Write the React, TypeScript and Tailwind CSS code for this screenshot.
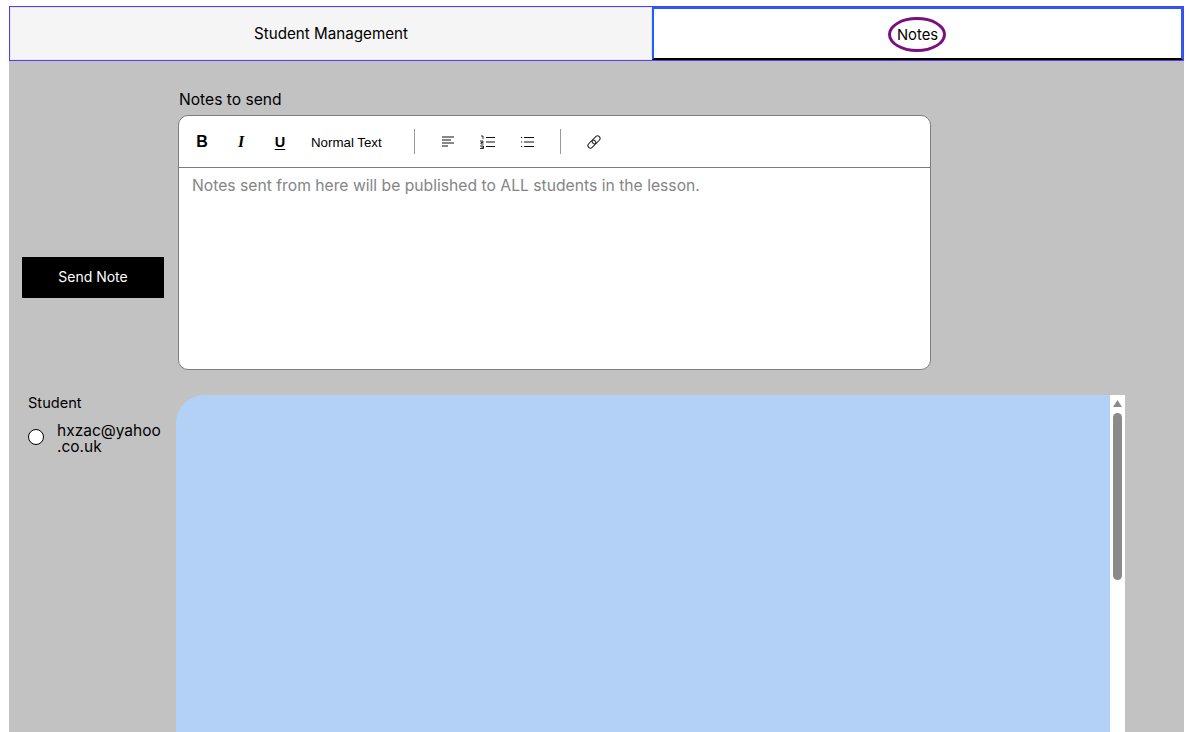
import React, { useState } from 'react';

const FONT = "font-['Inter','Noto_Sans',sans-serif]";

const BoldIcon = () => (
  <span className="w-[14px] text-center text-[16px] leading-none font-bold font-['Liberation_Sans',sans-serif] text-black">B</span>
);

const ItalicIcon = () => (
  <span className="w-[14px] text-center text-[16px] leading-none font-bold italic font-['Liberation_Serif',serif] text-black">I</span>
);

const UnderlineIcon = () => (
  <span className="w-[14px] text-center text-[14.500px] leading-[14px] font-bold underline underline-offset-2 font-['Liberation_Sans',sans-serif] text-black">U</span>
);

const AlignIcon = () => (
  <svg width="12" height="11" viewBox="0 0 12 11" stroke="#111" strokeWidth="1" fill="none">
    <path d="M0 1h12M0 4h9M0 7h12M0 10h6" />
  </svg>
);

const OrderedIcon = () => (
  <svg width="15" height="14" viewBox="0 0 15 14" stroke="#111" strokeWidth="1" fill="none">
    <path d="M6 2.500h9M6 7h9M6 11.500h9" />
    <path d="M1 1h2v3M0 6h3v1.500H1V9h2.500M0 11h3.500v2.500H0M1.500 12.200h2" strokeWidth="0.9" />
  </svg>
);

const BulletIcon = () => (
  <svg width="13" height="12" viewBox="0 0 13 12" stroke="#111" strokeWidth="1" fill="none">
    <path d="M3 1.500h10M3 6h10M3 10.500h10" />
    <path d="M0 1.500h1.200M0 6h1.200M0 10.500h1.200" />
  </svg>
);

const LinkIcon = () => (
  <svg width="16" height="16" viewBox="0 0 16 16" stroke="#222" strokeWidth="1" fill="none">
    <g transform="rotate(-45 8 8)">
      <rect x="0.500" y="5.500" width="9" height="5" rx="2.500" />
      <rect x="6.500" y="5.500" width="9" height="5" rx="2.500" />
    </g>
  </svg>
);

const Divider = () => <div className="w-px h-[25px] bg-[#9a9a9a]" />;

export default function App() {
  const [selected, setSelected] = useState(false);

  return (
    <div className={`h-screen overflow-hidden flex flex-col bg-white pt-[6px] pl-[9px] pr-[5px] text-black ${FONT}`}>
      {/* tabs */}
      <div className="flex h-[55px] shrink-0 border border-[#5a3fe0] bg-[#f5f5f5]">
        <div className="w-[642px] pt-[2px] flex items-center justify-center text-[15.200px] border border-[#e2e5fb]">Student Management</div>
        <div className="flex-1 flex items-center justify-center bg-white border-2 border-[#1f5fff] border-b-black">
          <span className="mr-[2px] mt-[2px] pt-px pl-[2px] w-[58px] h-[35px] flex items-center justify-center rounded-[50%] border-[3px] border-[#7b0f80] text-[14.800px]">
            Notes
          </span>
        </div>
      </div>

      <div className="flex-1 min-h-0 bg-[#c2c2c2] flex flex-col">
        {/* editor row */}
        <div className="flex items-end pt-[30px] pl-[13px]">
          <button className="w-[142px] h-[41px] mb-[72px] pb-[2px] bg-black text-white text-[14px]">Send Note</button>
          <div className="ml-[14px] w-[753px]">
            <div className="text-[15.600px] leading-[18px] mb-[6px] ml-px">Notes to send</div>
            <div className="h-[255px] rounded-[10px] border border-[#7d7d7d] bg-white flex flex-col">
              <div className="h-[52px] shrink-0 flex items-center border-b border-[#7d7d7d]">
                <div className="w-[235px] shrink-0 flex items-center">
                  <div className="ml-[16px] flex items-center gap-[25px]">
                    <BoldIcon />
                    <ItalicIcon />
                    <UnderlineIcon />
                  </div>
                  <span className="ml-[24px] mt-[2px] text-[13.300px] font-['Liberation_Sans',sans-serif]">Normal Text</span>
                </div>
                <Divider />
                <div className="ml-[27px] w-[118px] flex items-center gap-[26px]">
                  <AlignIcon />
                  <OrderedIcon />
                  <BulletIcon />
                </div>
                <Divider />
                <div className="ml-[25px] flex items-center">
                  <LinkIcon />
                </div>
              </div>
              <div className="pt-[9px] px-[13px] text-[15.700px] leading-[18px] text-[#858585]">
                Notes sent from here will be published to ALL students in the lesson.
              </div>
            </div>
          </div>
        </div>

        {/* student row */}
        <div className="flex-1 min-h-0 flex mt-[25px]">
          <div className="w-[167px] shrink-0 pl-[19px]">
            <div className="mt-px text-[14.600px] leading-[14px]">Student</div>
            <label className="mt-[13px] flex items-center cursor-pointer" onClick={() => setSelected(!selected)}>
              <span className="mb-[4px] w-[16px] h-[16px] rounded-full border border-black bg-white shrink-0 flex items-center justify-center">
                {selected && <span className="w-[8px] h-[8px] rounded-full bg-black" />}
              </span>
              <span className="ml-[13px] w-[106px] text-[15.500px] leading-[16px]">
                hxzac@yahoo<wbr />.co.uk
              </span>
            </label>
          </div>
          <div className="w-[949px] flex">
            <div className="flex-1 bg-[#b3d0f7] rounded-tl-[28px]" />
            <div className="w-[15px] bg-white flex flex-col items-center pt-[5px]">
              <svg width="9" height="7" viewBox="0 0 9 7" fill="#8a8a8a">
                <path d="M4.500 0L9 7H0z" />
              </svg>
              <div className="mt-[6px] w-[9px] h-[167px] rounded-full bg-[#8a8a8a]" />
            </div>
          </div>
        </div>
      </div>
    </div>
  );
}
